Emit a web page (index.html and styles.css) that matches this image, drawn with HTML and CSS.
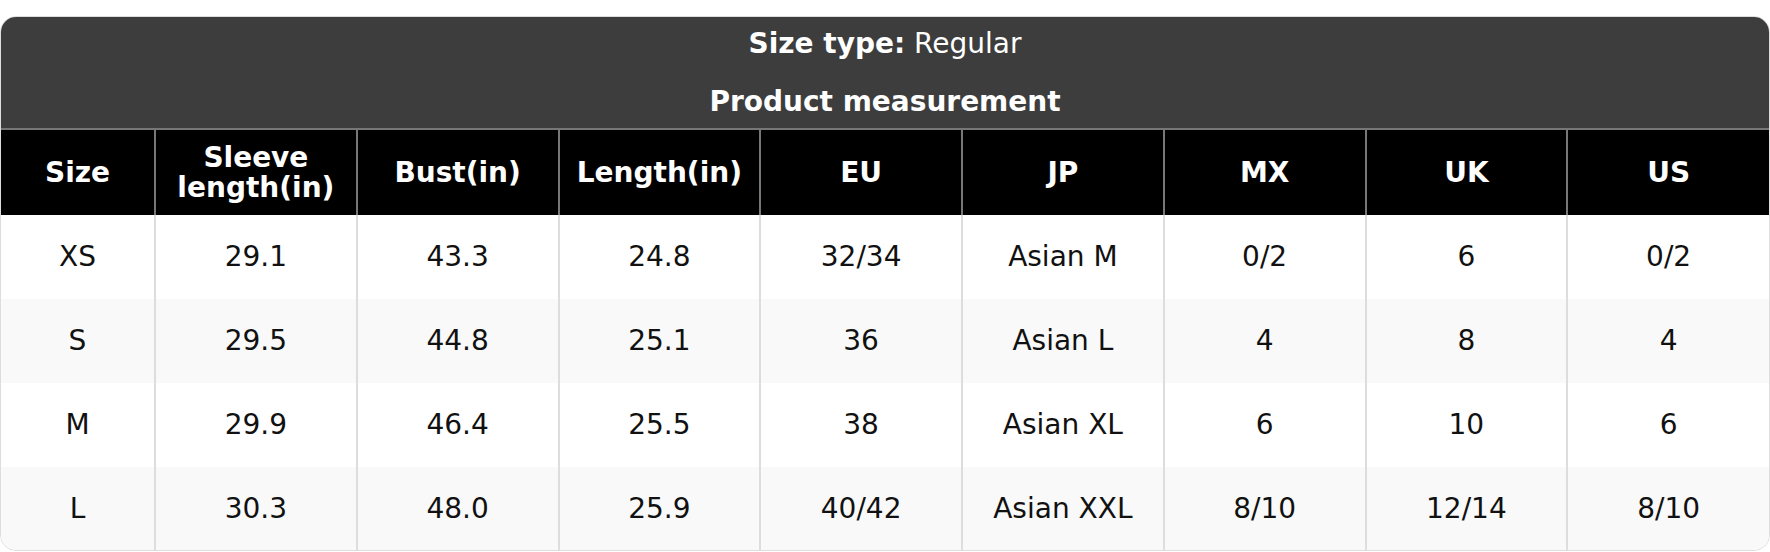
FILE: index.html
```html
<!DOCTYPE html>
<html lang="en">
<head>
<meta charset="utf-8">
<title>Size chart</title>
<link rel="stylesheet" href="styles.css">
</head>
<body>
<div class="card">
  <div class="banner">
    <div class="banner-line"><span><strong>Size type:</strong> Regular</span></div>
    <div class="banner-line"><span><strong>Product measurement</strong></span></div>
  </div>
  <table class="chart">
    <colgroup>
      <col class="col-first">
      <col><col><col><col><col><col><col><col>
    </colgroup>
    <thead>
      <tr>
        <th>Size</th>
        <th>Sleeve<br>length(in)</th>
        <th>Bust(in)</th>
        <th>Length(in)</th>
        <th>EU</th>
        <th>JP</th>
        <th>MX</th>
        <th>UK</th>
        <th>US</th>
      </tr>
    </thead>
    <tbody>
      <tr><td>XS</td><td>29.1</td><td>43.3</td><td>24.8</td><td>32/34</td><td>Asian M</td><td>0/2</td><td>6</td><td>0/2</td></tr>
      <tr><td>S</td><td>29.5</td><td>44.8</td><td>25.1</td><td>36</td><td>Asian L</td><td>4</td><td>8</td><td>4</td></tr>
      <tr><td>M</td><td>29.9</td><td>46.4</td><td>25.5</td><td>38</td><td>Asian XL</td><td>6</td><td>10</td><td>6</td></tr>
      <tr><td>L</td><td>30.3</td><td>48.0</td><td>25.9</td><td>40/42</td><td>Asian XXL</td><td>8/10</td><td>12/14</td><td>8/10</td></tr>
    </tbody>
  </table>
</div>
</body>
</html>
```

FILE: styles.css
```css
* { box-sizing: border-box; }

html, body {
  margin: 0;
  padding: 0;
  background: #ffffff;
}

body {
  padding-top: 16px;
  font-family: "DejaVu Sans", Verdana, sans-serif;
  font-size: 28px;
  color: #111111;
}

.card {
  width: 1770px;
  height: 535px;
  border: 1px solid #dddddd;
  border-radius: 16px;
  overflow: hidden;
  background: #ffffff;
}

.banner {
  background: #3d3d3d;
  color: #ffffff;
  display: flex;
  flex-direction: column;
  border-bottom: 2px solid #777777;
}

.banner-line {
  display: flex;
  align-items: center;
  justify-content: center;
  line-height: 1;
}

.banner-line:first-child {
  height: 54px;
}

.banner-line:last-child {
  height: 57px;
  padding-top: 4px;
}

.chart {
  width: 1768px;
  table-layout: fixed;
  border-collapse: collapse;
}

.col-first { width: 154px; }

.chart th {
  background: #000000;
  color: #ffffff;
  font-weight: bold;
  height: 85px;
  line-height: 30px;
  text-align: center;
  vertical-align: middle;
  padding: 0 4px;
  border-left: 2px solid #777777;
}

.chart td {
  height: 84px;
  text-align: center;
  vertical-align: middle;
  padding: 0 4px 1px;
  border-left: 2px solid #dddddd;
  color: #111111;
}

.chart th:first-child,
.chart td:first-child {
  border-left: none;
}

.chart tbody tr:nth-child(even) td {
  background: #f9f9f9;
}
```
